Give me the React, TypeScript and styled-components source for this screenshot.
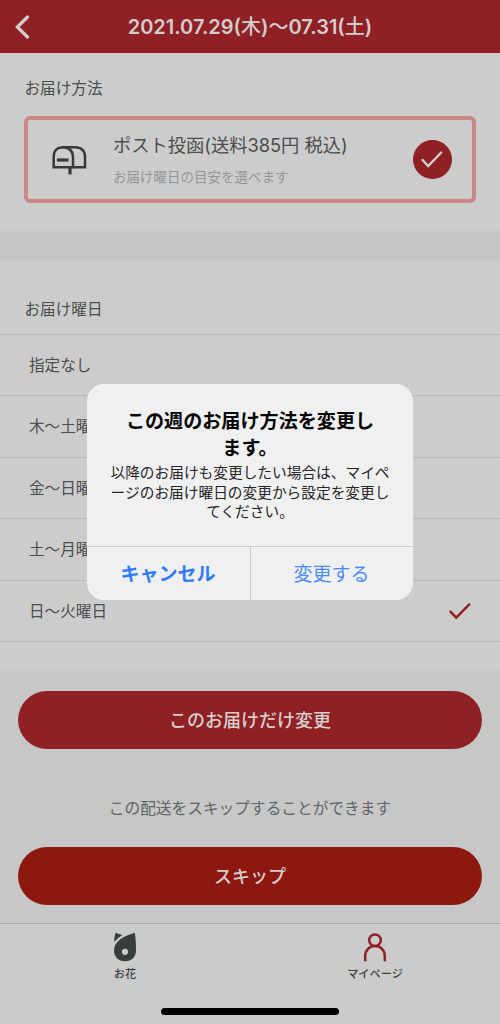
import React from 'react';
import styled, { createGlobalStyle } from 'styled-components';

const GlobalStyle = createGlobalStyle`
  *, *::before, *::after { box-sizing: border-box; }
  body {
    margin: 0;
    background: #cccccc;
    font-family: Inter, "Noto Sans CJK JP", sans-serif;
    color: #4b4d4d;
  }
  button { font-family: inherit; cursor: pointer; }
  svg { display: block; }
`;

const Screen = styled.div`
  position: relative;
  width: 500px;
  height: 1024px;
  overflow: hidden;
  display: flex;
  flex-direction: column;
  background: #c7c7c7;
  white-space: nowrap;
`;

const Header = styled.header`
  flex: none;
  height: 53px;
  display: grid;
  grid-template-columns: 60px 1fr 60px;
  align-items: center;
  background: #8f2024;
  color: #d2cccc;
`;

const BackButton = styled.button`
  border: 0;
  padding: 0 0 0 15px;
  background: none;
  color: inherit;
`;

const HeaderTitle = styled.h1`
  margin: 0;
  padding-top: 1px;
  text-align: center;
  font-size: 20px;
  line-height: 28px;
  font-weight: 600;
`;

const Kanji = styled.span`
  font-weight: 500;
`;

const Section = styled.section<{ $height: number }>`
  flex: none;
  height: ${(p) => p.$height}px;
  background: #cccccc;
`;

const SectionTitle = styled.h2<{ $top: number }>`
  margin: 0;
  padding: ${(p) => p.$top}px 0 0 24.5px;
  font-size: 15.6px;
  line-height: 24px;
  font-weight: 400;
`;

const Band = styled.div`
  flex: none;
  height: 30px;
  background: #c6c6c6;
`;

const MethodCard = styled.div`
  display: flex;
  align-items: center;
  width: 452px;
  height: 87px;
  margin: 15px 0 0 24px;
  padding: 0 20.5px 0 24px;
  border: 4px solid #c98786;
  border-radius: 6px;
`;

const MethodText = styled.div`
  flex: 1;
  padding-left: 26px;
`;

const MethodName = styled.div`
  font-size: 18.25px;
  line-height: 28px;
`;

const MethodNote = styled.div`
  margin-top: 7px;
  font-size: 13.5px;
  line-height: 22px;
  color: #949696;
`;

const CheckCircle = styled.div`
  display: grid;
  place-items: center;
  width: 39px;
  height: 39px;
  border-radius: 50%;
  background: #8f2024;
`;

const DayList = styled.ul`
  list-style: none;
  margin: 11.5px 0 0;
  padding: 0;
  border-top: 1.5px solid #b9b9b9;
`;

const DayRow = styled.li`
  display: flex;
  align-items: center;
  justify-content: space-between;
  height: 61.5px;
  padding: 2px 29px 0;
  border-bottom: 1.5px solid #b9b9b9;
  font-size: 15.6px;
  line-height: 24px;
`;

const Actions = styled.div`
  flex: 1;
  display: flex;
  flex-direction: column;
  padding: 19.5px 18px 0;
`;

const PillButton = styled.button<{ $color: string }>`
  height: 58px;
  padding: 2px 0 0;
  border: 0;
  border-radius: 29px;
  background: ${(p) => p.$color};
  color: #d6cdcd;
  font-size: 18px;
  line-height: 28px;
  font-weight: 500;
`;

const SkipNote = styled.p`
  margin: 48px 0 26px;
  text-align: center;
  font-size: 15.7px;
  line-height: 24px;
  color: #616464;
`;

const TabBar = styled.nav`
  flex: none;
  height: 101px;
  display: grid;
  grid-template-columns: 1fr 1fr;
  border-top: 1px solid #a9a9a9;
  background: #cbcbcb;
`;

const Tab = styled.a`
  display: flex;
  flex-direction: column;
  align-items: center;
  padding-top: 8px;
  font-size: 11.2px;
  line-height: 16px;
  font-weight: 500;
  color: #3f4141;
`;

const TabIcon = styled.span`
  height: 34px;
`;

const HomeIndicator = styled.div`
  position: absolute;
  left: 161px;
  bottom: 9.5px;
  width: 178px;
  height: 6.5px;
  border-radius: 4px;
  background: #000;
`;

const Overlay = styled.div`
  position: absolute;
  inset: 0;
  display: flex;
  align-items: flex-start;
  justify-content: center;
  padding-top: 384px;
`;

const Dialog = styled.div`
  width: 326px;
  height: 215.5px;
  display: flex;
  flex-direction: column;
  border-radius: 17px;
  background: #f0f0f0;
  overflow: hidden;
  text-align: center;
`;

const DialogBody = styled.div`
  flex: 1;
  padding-top: 24px;
`;

const DialogTitle = styled.h3`
  margin: 0;
  font-size: 19.1px;
  line-height: 27px;
  font-weight: 600;
  color: #050505;
`;

const DialogText = styled.p`
  margin: 2px 0 0;
  font-size: 14.7px;
  line-height: 19.5px;
  color: #262626;
`;

const DialogActions = styled.div`
  height: 54px;
  display: grid;
  grid-template-columns: 1fr 1fr;
  border-top: 1px solid #cbcbcb;
`;

const DialogButton = styled.button<{ $strong?: boolean }>`
  border: 0;
  padding: 3px 1px 0 0;
  background: none;
  color: ${(p) => (p.$strong ? '#2f7cf6' : '#4a8cf7')};
  font-size: 19px;
  line-height: 28px;
  font-weight: ${(p) => (p.$strong ? 600 : 400)};
  & + & { border-left: 1px solid #cbcbcb; }
`;

const MailboxIcon = () => (
  <svg width="35" height="31" viewBox="0 0 35 31" fill="none" stroke="#383a3a" strokeWidth="2.5">
    <path d="M1.7 23.3V12.5C1.7 6.8 5.5 3.2 11 3.2S21 6.8 21 12.5V23.3Z" />
    <path d="M11 3.2H23.3C29 3.2 33 6.8 33 12.5V23.3H21" />
    <path d="M5 16H16.5" strokeWidth="3.2" />
    <path d="M18 23.5V30.5" strokeWidth="3.2" />
  </svg>
);

const FlowerIcon = () => (
  <svg width="24" height="30" viewBox="0 0 24 30" fill="#3a3d3d">
    <path d="M2.3 1.5Q2.8.6 3.8 1.2L9.4 3.1Q5.1 5.7 1.2 9.9Q1.1 5.4 2.3 1.5Z" />
    <path
      fillRule="evenodd"
      d="M20.4 1.2C21.4.8 21.9 1.3 22 2.2C22.7 7 23 12 23 18.4C23 25 18.4 29.2 12 29.2S1 25 1 18.4C1 9.5 9.8 4.2 20.4 1.2ZM12 16.7A3.1 3.1 0 1 0 12 22.9A3.1 3.1 0 1 0 12 16.7Z"
    />
  </svg>
);

const PersonIcon = () => (
  <svg width="24" height="30" viewBox="0 0 24 30" fill="none" stroke="#8f2024" strokeWidth="2.5">
    <circle cx="12" cy="8.2" r="5.8" />
    <path d="M2.2 29.3V24.2C2.2 18 6.4 14 12 14S21.8 18 21.8 24.2V29.3" />
  </svg>
);

const days = ['指定なし', '木〜土曜日', '金〜日曜日', '土〜月曜日', '日〜火曜日'];
const selectedDay = 4;

export default function App() {
  return (
    <>
      <GlobalStyle />
      <Screen>
        <Header>
          <BackButton aria-label="戻る">
            <svg width="15" height="24" viewBox="0 0 15 24" fill="none" stroke="currentColor" strokeWidth="3.2" strokeLinecap="round">
              <path d="M12.5 2L2.3 12L12.5 22" />
            </svg>
          </BackButton>
          <HeaderTitle>
            2021.07.29(<Kanji>木</Kanji>)<Kanji>〜</Kanji>07.31(<Kanji>土</Kanji>)
          </HeaderTitle>
        </Header>

        <Section $height={178}>
          <SectionTitle $top={24}>お届け方法</SectionTitle>
          <MethodCard>
            <MailboxIcon />
            <MethodText>
              <MethodName>ポスト投函(送料385円 税込)</MethodName>
              <MethodNote>お届け曜日の目安を選べます</MethodNote>
            </MethodText>
            <CheckCircle>
              <svg width="22" height="17" viewBox="0 0 22 17" fill="none" stroke="#d6cdcd" strokeWidth="2.4" strokeLinecap="round">
                <path d="M1.5 9L7.2 15L20.2 1.5" />
              </svg>
            </CheckCircle>
          </MethodCard>
        </Section>

        <Band />

        <Section $height={410}>
          <SectionTitle $top={37}>お届け曜日</SectionTitle>
          <DayList>
            {days.map((day, i) => (
              <DayRow key={day}>
                {day}
                {i === selectedDay && (
                  <svg width="22" height="17" viewBox="0 0 22 17" fill="none" stroke="#8f2024" strokeWidth="2.4" strokeLinecap="round">
                    <path d="M1.5 8.7L7.2 14.7L20.3 1.4" />
                  </svg>
                )}
              </DayRow>
            ))}
          </DayList>
        </Section>

        <Actions>
          <PillButton $color="#8f2024">このお届けだけ変更</PillButton>
          <SkipNote>この配送をスキップすることができます</SkipNote>
          <PillButton $color="#8c180f">スキップ</PillButton>
        </Actions>

        <TabBar>
          <Tab>
            <TabIcon><FlowerIcon /></TabIcon>
            お花
          </Tab>
          <Tab>
            <TabIcon><PersonIcon /></TabIcon>
            マイページ
          </Tab>
        </TabBar>
        <HomeIndicator />

        <Overlay>
          <Dialog role="alertdialog">
            <DialogBody>
              <DialogTitle>
                この週のお届け方法を変更し
                <br />
                ます。
              </DialogTitle>
              <DialogText>
                以降のお届けも変更したい場合は、マイペ
                <br />
                ージのお届け曜日の変更から設定を変更し
                <br />
                てください。
              </DialogText>
            </DialogBody>
            <DialogActions>
              <DialogButton $strong>キャンセル</DialogButton>
              <DialogButton>変更する</DialogButton>
            </DialogActions>
          </Dialog>
        </Overlay>
      </Screen>
    </>
  );
}
